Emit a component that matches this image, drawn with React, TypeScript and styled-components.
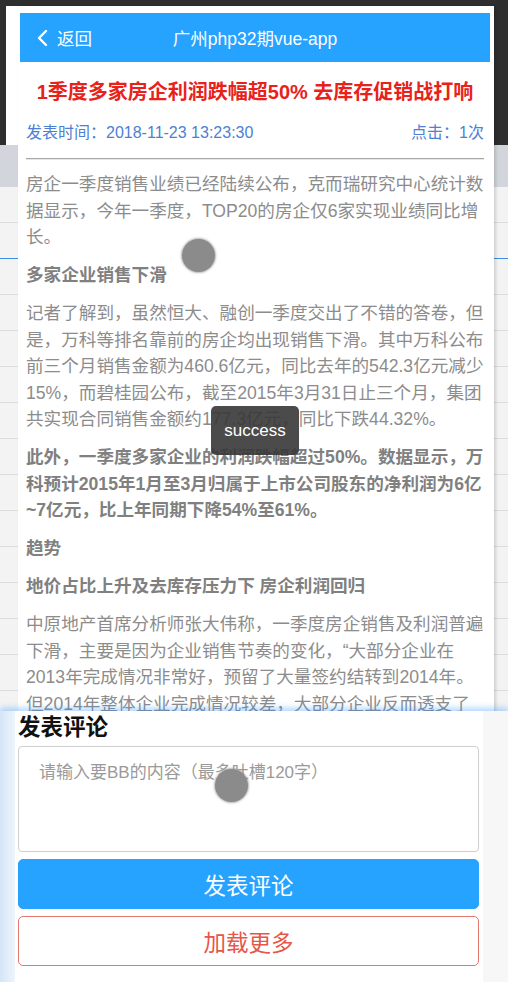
import styled, { createGlobalStyle } from "styled-components";

const GlobalStyle = createGlobalStyle`
  html, body {
    margin: 0;
    padding: 0;
    background: #ececec;
  }
  * {
    box-sizing: border-box;
  }
`;

const FONT = `"Liberation Sans", "Noto Sans CJK SC", sans-serif`;

// the whole capture, 508 x 982
const Stage = styled.div`
  position: relative;
  width: 508px;
  height: 982px;
  overflow: hidden;
  font-family: ${FONT};
`;

// what lies behind the emulator: dark toolbar on top, a list below
const Backdrop = styled.div`
  display: flex;
  flex-direction: column;
  height: 100%;
`;

const DarkBand = styled.div`
  height: 145px;
  background: #2e2e2e;
  padding: 6px 0 0 6px;
  display: flex;
`;

const FrameLip = styled.div`
  width: 12px;
  background: #fff;
`;

const BackdropHead = styled.div`
  height: 42px;
  background: #d2d6dc;
`;

const BackdropRow = styled.div<{ $accent?: boolean }>`
  height: 36px;
  background: #f3f3f3;
  border-bottom: 1px solid ${(p) => (p.$accent ? "#3a8ee6" : "#dcdcdc")};
`;

// emulated phone screen laid over the backdrop
const Phone = styled.div`
  position: absolute;
  left: 18px;
  top: 6px;
  width: 476px;
  bottom: 0;
  background: #fff;
  padding: 7px 4px 0 2px;
  box-shadow: 2px 0 3px rgba(0, 0, 0, 0.15);
  display: flex;
  flex-direction: column;
`;

const Header = styled.div`
  height: 49px;
  background: #26a2ff;
  color: #fff;
  display: grid;
  grid-template-columns: 1fr auto 1fr;
  align-items: center;
  font-size: 17.5px;
  flex-shrink: 0;
`;

const BackButton = styled.div`
  display: flex;
  align-items: center;
  gap: 9px;
  padding-left: 17px;
`;

const HeaderTitle = styled.div`
  white-space: nowrap;
`;

const Article = styled.div`
  padding: 0 6px;
  overflow: hidden;
`;

const Title = styled.h1`
  margin: 15px 0 0;
  font-size: 20px;
  line-height: 30px;
  font-weight: bold;
  color: #e8221b;
  text-align: center;
  white-space: nowrap;
`;

const Meta = styled.div`
  margin-top: 14px;
  display: flex;
  justify-content: space-between;
  font-size: 16px;
  line-height: 24px;
  color: #4d7fd4;
`;

const Rule = styled.div`
  margin-top: 13px;
  border-top: 1px solid #a8a8a8;
  border-bottom: 1px solid #e6e6e6;
`;

const Body = styled.div`
  margin-top: 11px;
  font-size: 17.6px;
  line-height: 26.5px;
  color: #8c8c8c;
`;

const Para = styled.p<{ $bold?: boolean }>`
  margin: 0 0 11.5px;
  font-weight: ${(p) => (p.$bold ? "bold" : "normal")};
  color: ${(p) => (p.$bold ? "#808080" : "#8c8c8c")};
`;

// fixed comment bar at the bottom
const Dock = styled.div`
  position: absolute;
  left: 0;
  right: 0;
  top: 711px;
  bottom: 0;
  display: flex;
  box-shadow: 0 -3px 6px rgba(38, 140, 255, 0.35);
`;

const DockShade = styled.div`
  width: 15px;
  background: linear-gradient(to right, #d4e5f7, #eef5fc);
`;

const DockFill = styled.div`
  flex: 1;
  background: #f7f7f7;
`;

const CommentPanel = styled.div`
  width: 468px;
  background: #fff;
  padding: 2px 4px 0 3px;
  display: flex;
  flex-direction: column;
`;

const CommentHeading = styled.h3`
  margin: 0;
  font-size: 22.5px;
  line-height: 30px;
  font-weight: bold;
  color: #111;
`;

const CommentBox = styled.textarea`
  margin-top: 3px;
  width: 461px;
  height: 106px;
  border: 1px solid #cfcfcf;
  border-radius: 4px;
  padding: 14px 20px;
  font-family: ${FONT};
  font-size: 17px;
  line-height: 24px;
  resize: none;
  outline: none;
  &::placeholder {
    color: #9a9a9a;
  }
`;

const Button = styled.div<{ $variant: "primary" | "danger" }>`
  margin-top: 7px;
  width: 461px;
  height: 50px;
  border-radius: 5px;
  display: flex;
  align-items: center;
  justify-content: center;
  font-size: 22.5px;
  background: ${(p) => (p.$variant === "primary" ? "#26a2ff" : "#fff")};
  color: ${(p) => (p.$variant === "primary" ? "#fff" : "#e8554b")};
  border: 1px solid ${(p) => (p.$variant === "primary" ? "#26a2ff" : "#e5776f")};
`;

// emulator touch pointer
const Touch = styled.div`
  position: absolute;
  width: 33px;
  height: 33px;
  margin: -16px 0 0 -16px;
  border-radius: 50%;
  background: #8b8b8b;
  box-shadow: 0 0 2px 1px rgba(130, 130, 130, 0.6);
`;

const Toast = styled.div`
  position: absolute;
  left: 211px;
  top: 406px;
  width: 88px;
  height: 49px;
  border-radius: 5px;
  background: rgba(55, 55, 55, 0.9);
  color: #fff;
  font-size: 17px;
  display: flex;
  align-items: center;
  justify-content: center;
`;

const rows = Array.from({ length: 22 }, (_, i) => i);

export default function App() {
  return (
    <Stage>
      <GlobalStyle />
      <Backdrop>
        <DarkBand>
          <FrameLip />
        </DarkBand>
        <BackdropHead />
        {rows.map((i) => (
          <BackdropRow key={i} $accent={i === 1} />
        ))}
      </Backdrop>

      <Phone>
        <Header>
          <BackButton>
            <svg width="11" height="18" viewBox="0 0 11 18">
              <polyline
                points="9,2 2,9 9,16"
                fill="none"
                stroke="#fff"
                strokeWidth="2.4"
                strokeLinecap="round"
                strokeLinejoin="round"
              />
            </svg>
            返回
          </BackButton>
          <HeaderTitle>广州php32期vue-app</HeaderTitle>
          <div />
        </Header>
        <Article>
          <Title>1季度多家房企利润跌幅超50% 去库存促销战打响</Title>
          <Meta>
            <span>发表时间：2018-11-23 13:23:30</span>
            <span>点击：1次</span>
          </Meta>
          <Rule />
          <Body>
            <Para>
              房企一季度销售业绩已经陆续公布，克而瑞研究中心统计数据显示，今年一季度，TOP20的房企仅6家实现业绩同比增长。
            </Para>
            <Para $bold>多家企业销售下滑</Para>
            <Para>
              记者了解到，虽然恒大、融创一季度交出了不错的答卷，但是，万科等排名靠前的房企均出现销售下滑。其中万科公布前三个月销售金额为460.6亿元，同比去年的542.3亿元减少15%，而碧桂园公布，截至2015年3月31日止三个月，集团共实现合同销售金额约177.3亿元，同比下跌44.32%。
            </Para>
            <Para $bold>
              此外，一季度多家企业的利润跌幅超过50%。数据显示，万科预计2015年1月至3月归属于上市公司股东的净利润为6亿~7亿元，比上年同期下降54%至61%。
            </Para>
            <Para $bold>趋势</Para>
            <Para $bold>地价占比上升及去库存压力下 房企利润回归</Para>
            <Para>
              中原地产首席分析师张大伟称，一季度房企销售及利润普遍下滑，主要是因为企业销售节奏的变化，“大部分企业在2013年完成情况非常好，预留了大量签约结转到2014年。但2014年整体企业完成情况较差，大部分企业反而透支了2015年的库存，这也导致了2015年一季度房企业绩的下滑。”
            </Para>
          </Body>
        </Article>
      </Phone>

      <Dock>
        <DockShade />
        <CommentPanel>
          <CommentHeading>发表评论</CommentHeading>
          <CommentBox placeholder="请输入要BB的内容（最多吐槽120字）" />
          <Button $variant="primary">发表评论</Button>
          <Button $variant="danger">加载更多</Button>
        </CommentPanel>
        <DockFill />
      </Dock>

      <Touch style={{ left: 198, top: 255 }} />
      <Touch style={{ left: 231, top: 785 }} />
      <Toast>success</Toast>
    </Stage>
  );
}
